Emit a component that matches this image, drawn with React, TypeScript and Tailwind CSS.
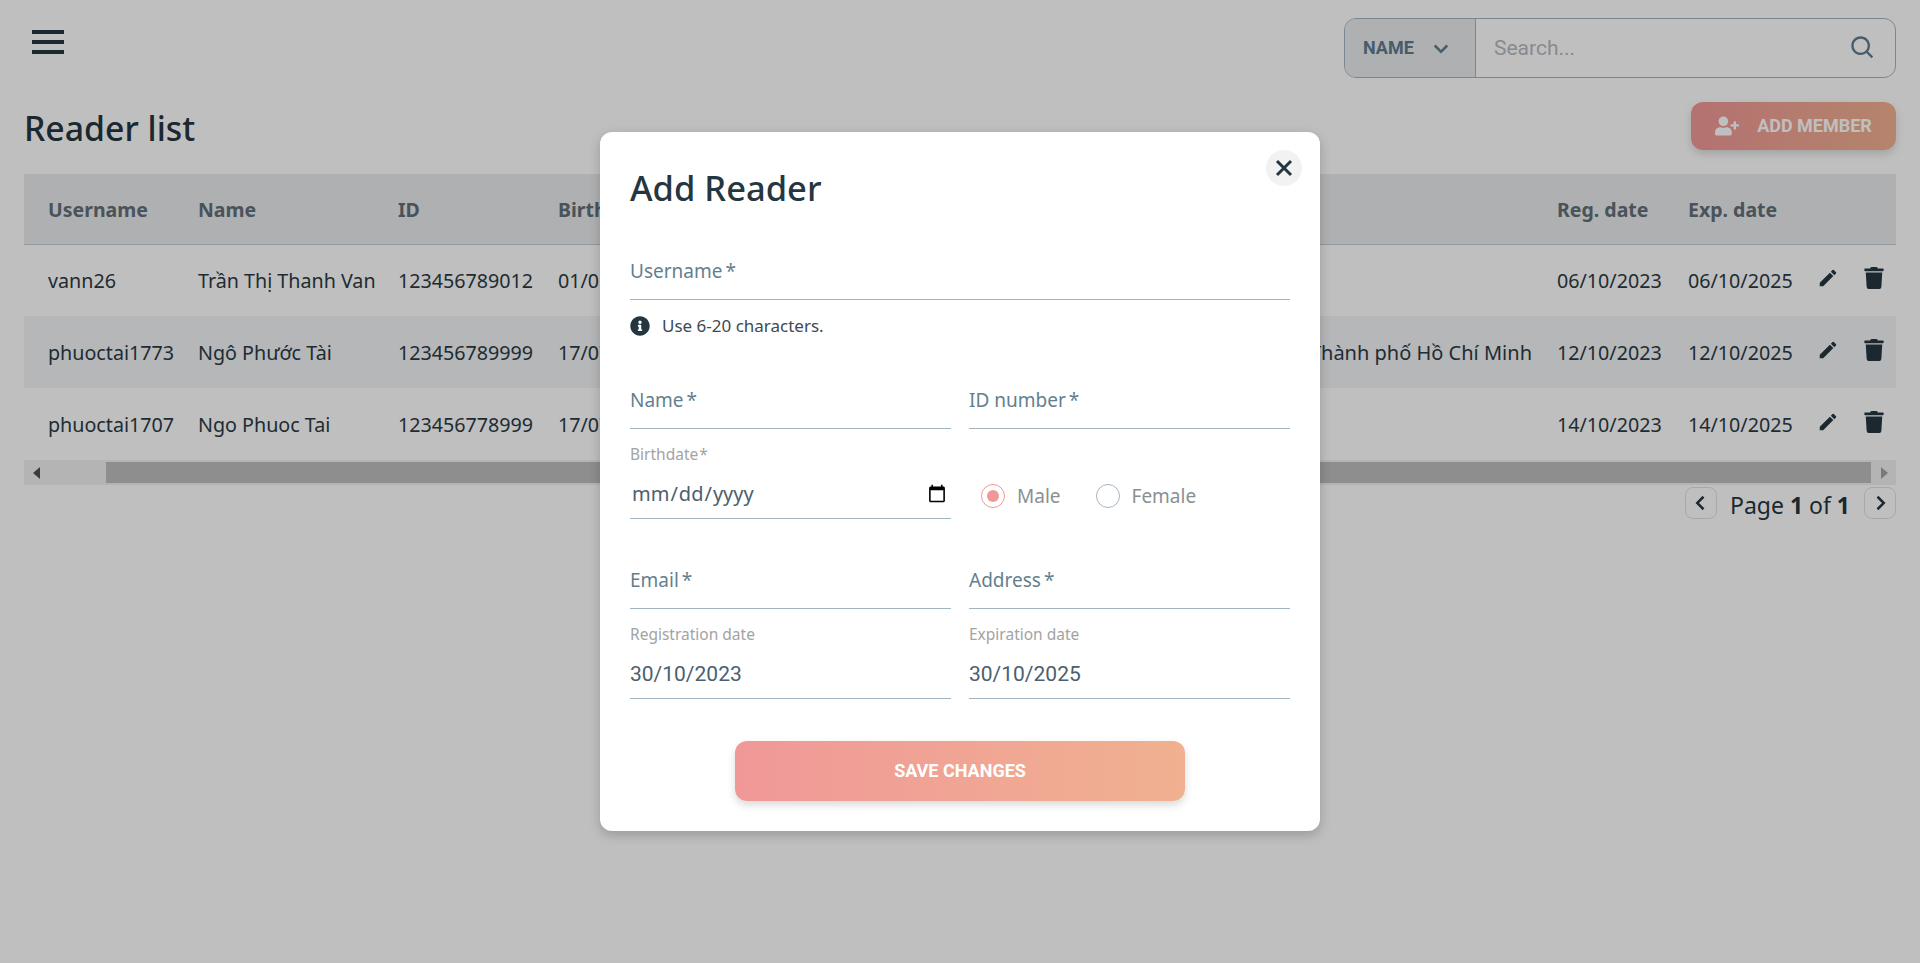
import { BiChevronDown, BiChevronLeft, BiChevronRight, BiSearch } from "react-icons/bi";
import { FaInfoCircle, FaTrash, FaUserPlus } from "react-icons/fa";
import { MdEdit } from "react-icons/md";

const readers = [
  {
    username: "vann26",
    name: "Trần Thị Thanh Van",
    id: "123456789012",
    birth: "01/01/2002",
    gender: "Female",
    email: "vann26@gmail.com",
    address: "",
    reg: "06/10/2023",
    exp: "06/10/2025",
  },
  {
    username: "phuoctai1773",
    name: "Ngô Phước Tài",
    id: "123456789999",
    birth: "17/07/2002",
    gender: "Male",
    email: "phuoctai1773@gmail.com",
    address: "Thành phố Hồ Chí Minh",
    reg: "12/10/2023",
    exp: "12/10/2025",
  },
  {
    username: "phuoctai1707",
    name: "Ngo Phuoc Tai",
    id: "123456778999",
    birth: "17/07/2002",
    gender: "Male",
    email: "phuoctai1707@gmail.com",
    address: "",
    reg: "14/10/2023",
    exp: "14/10/2025",
  },
];

const headers = ["Username", "Name", "ID", "Birthdate", "Gender", "Email", "Address", "Reg. date", "Exp. date", ""];

function TextField({ label }: { label: string }) {
  return (
    <div className="h-[60px] flex items-center pt-[3px] border-b border-[#a3b5c0] text-[19px] text-[#637f8f]">
      {label}
      <span className="ml-[3px]">*</span>
    </div>
  );
}

function ReadField({ label, value }: { label: string; value: string }) {
  return (
    <div className="h-[90px] border-b border-[#a3b5c0]">
      <div className="pt-[15px] h-[45px] text-[15.5px] leading-[20px] text-[#a3a3a3]">{label}</div>
      <div className="h-[40px] pt-[2px] flex items-center font-['Roboto'] text-[21px] text-[#4a6070]">{value}</div>
    </div>
  );
}

function Radio({ label, checked }: { label: string; checked?: boolean }) {
  return (
    <label className="flex items-center gap-[12px] text-[19px] text-[#8a8f93]">
      {checked ? (
        <span className="w-[24px] h-[24px] rounded-full border border-[#f09898] flex items-center justify-center">
          <span className="w-[12px] h-[12px] rounded-full bg-[#f09898]" />
        </span>
      ) : (
        <span className="w-[24px] h-[24px] rounded-full border border-[#a3b5c0]" />
      )}
      {label}
    </label>
  );
}

export default function App() {
  return (
    <div className="relative h-[963px] overflow-hidden bg-white font-['Noto_Sans',sans-serif] text-[#2b3a44]">
      <div className="px-[24px] pt-[18px]">
        {/* top bar */}
        <div className="flex items-center justify-between h-[60px]">
          <div className="ml-[8px] mb-[12px] w-[32px] flex flex-col gap-[6px]">
            <span className="h-[4px] bg-[#263640]" />
            <span className="h-[4px] bg-[#263640]" />
            <span className="h-[4px] bg-[#263640]" />
          </div>
          <div className="w-[552px] h-[60px] flex border border-[#a3b5c0] rounded-[12px] overflow-hidden">
            <div className="w-[131px] flex items-center pl-[18px] bg-[#e9ebee] border-r border-[#a3b5c0] font-['Roboto'] font-bold text-[18px] text-[#5f7c8c]">
              <span className="-mt-[1px]">NAME</span>
              <BiChevronDown className="ml-[12px] text-[30px]" />
            </div>
            <div className="flex-1 flex items-center justify-between pl-[18px] pr-[18px]">
              <span className="mt-[2px] font-['Roboto'] text-[21px] text-[#b4babf]">Search...</span>
              <BiSearch className="text-[28px] text-[#5f7c8c]" />
            </div>
          </div>
        </div>

        {/* title */}
        <div className="mt-[24px] h-[48px] flex items-center justify-between">
          <h1 className="mt-[4px] text-[33.8px] font-medium text-[#263640]">Reader list</h1>
          <button className="w-[205px] h-[48px] flex items-center justify-center gap-[18px] pb-[1px] rounded-[12px] bg-gradient-to-r from-[#f09898] to-[#f0b190] shadow-[0_4px_8px_rgba(0,0,0,0.15)] font-['Roboto'] font-bold text-[18px] text-white">
            <FaUserPlus className="text-[24px]" />
            ADD MEMBER
          </button>
        </div>

        {/* table */}
        <div className="mt-[24px] overflow-hidden">
          <table className="w-[1872px] table-fixed border-collapse text-[19.7px] whitespace-nowrap">
            <colgroup>
              <col className="w-[150px]" />
              <col className="w-[200px]" />
              <col className="w-[160px]" />
              <col className="w-[160px]" />
              <col className="w-[100px]" />
              <col className="w-[270px]" />
              <col className="w-[469px]" />
              <col className="w-[131px]" />
              <col className="w-[140px]" />
              <col className="w-[92px]" />
            </colgroup>
            <thead>
              <tr className="h-[70px] bg-[#e9ebee] border-b border-[#c5ced6]">
                {headers.map((h) => (
                  <th key={h} className="pl-[24px] pt-[2px] text-left text-[19.5px] font-bold text-[#636f77]">
                    {h}
                  </th>
                ))}
              </tr>
            </thead>
            <tbody>
              {readers.map((r, i) => (
                <tr key={r.username} className={i === 1 ? "h-[72px] bg-[#f3f4f6]" : "h-[72px]"}>
                  <td className="pl-[24px] pt-[1px]">{r.username}</td>
                  <td className="pl-[24px] pt-[1px]">{r.name}</td>
                  <td className="pl-[24px] pt-[1px]">{r.id}</td>
                  <td className="pl-[24px] pt-[1px]">{r.birth}</td>
                  <td className="pl-[24px] pt-[1px]">{r.gender}</td>
                  <td className="pl-[24px] pt-[1px]">{r.email}</td>
                  <td className="pl-[24px] pt-[1px] pr-[1px] text-right text-[20px]">{r.address}</td>
                  <td className="pl-[24px] pt-[1px]">{r.reg}</td>
                  <td className="pl-[24px] pt-[1px]">{r.exp}</td>
                  <td>
                    <div className="flex items-center gap-[24px] pl-[13px] mb-[5px]">
                      <MdEdit className="text-[22px] text-[#263640]" />
                      <FaTrash className="text-[22px] text-[#263640]" />
                    </div>
                  </td>
                </tr>
              ))}
            </tbody>
          </table>
          {/* scrollbar */}
          <div className="h-[25px] flex bg-[#f1f1f1]">
            <div className="w-[82px] flex items-center pl-[9px]">
              <span className="w-0 h-0 border-y-[6px] border-y-transparent border-r-[7px] border-r-[#505050]" />
            </div>
            <div className="flex-1 my-[2px] bg-[#bebebe]" />
            <div className="w-[25px] flex items-center justify-end pr-[8px]">
              <span className="w-0 h-0 border-y-[6px] border-y-transparent border-l-[7px] border-l-[#a3a3a3]" />
            </div>
          </div>
        </div>

        {/* pagination */}
        <div className="mt-[2px] flex items-start justify-end">
          <button className="w-[32px] h-[32px] flex items-center justify-center rounded-[8px] border border-[#dee2e6] text-[#263640]">
            <BiChevronLeft className="text-[32px]" />
          </button>
          <span className="ml-[13px] mr-[14px] mt-[1px] text-[23px] text-[#263640]">
            Page <b>1</b> of <b>1</b>
          </span>
          <button className="w-[32px] h-[32px] flex items-center justify-center rounded-[8px] border border-[#dee2e6] text-[#263640]">
            <BiChevronRight className="text-[32px]" />
          </button>
        </div>
      </div>

      {/* backdrop */}
      <div className="absolute inset-0 bg-black/25" />

      {/* modal */}
      <div className="absolute left-[600px] top-[132px] w-[720px] h-[699px] px-[30px] rounded-[12px] bg-white shadow-[0_4px_12px_rgba(0,0,0,0.2)]">
        <button className="absolute right-[18px] top-[18px] w-[36px] h-[36px] rounded-full bg-[#f2f2f2] flex items-center justify-center text-[#263640]">
          <svg width="18" height="18" viewBox="0 0 18 18" fill="none" stroke="currentColor" strokeWidth="3">
            <path d="M2 2 16 16M16 2 2 16" />
          </svg>
        </button>
        <h2 className="pt-[30px] h-[108px] text-[34.5px] leading-[52px] font-medium text-[#263640]">Add Reader</h2>
        <TextField label="Username" />
        <div className="h-[69px] pt-[13px] flex items-start gap-[12px] text-[17px] text-[#3d4a53]">
          <FaInfoCircle className="mt-[3px] text-[20px] text-[#263640]" />
          Use 6-20 characters.
        </div>
        <div className="grid grid-cols-2 gap-x-[18px]">
          <TextField label="Name" />
          <TextField label="ID number" />
          <div className="h-[90px] border-b border-[#a3b5c0]">
            <div className="pt-[15px] h-[45px] text-[15.5px] leading-[20px] text-[#a3a3a3]">
              Birthdate<span className="ml-[1px]">*</span>
            </div>
            <input
              type="date"
              className="block w-full h-[40px] pl-[1px] pr-[2px] text-[20px] text-[#4a6070] outline-none"
            />
          </div>
          <div className="h-[90px] flex items-end pb-[9px] pl-[12px] gap-[35px]">
            <Radio label="Male" checked />
            <Radio label="Female" />
          </div>
          <div className="col-span-2 h-[30px]" />
          <TextField label="Email" />
          <TextField label="Address" />
          <ReadField label="Registration date" value="30/10/2023" />
          <ReadField label="Expiration date" value="30/10/2025" />
        </div>
        <button className="block mx-auto mt-[42px] pb-[1px] w-[450px] h-[60px] rounded-[12px] bg-gradient-to-r from-[#f09898] to-[#f0b190] shadow-[0_4px_8px_rgba(0,0,0,0.15)] font-['Roboto'] font-bold text-[18px] text-white">
          SAVE CHANGES
        </button>
      </div>
    </div>
  );
}
